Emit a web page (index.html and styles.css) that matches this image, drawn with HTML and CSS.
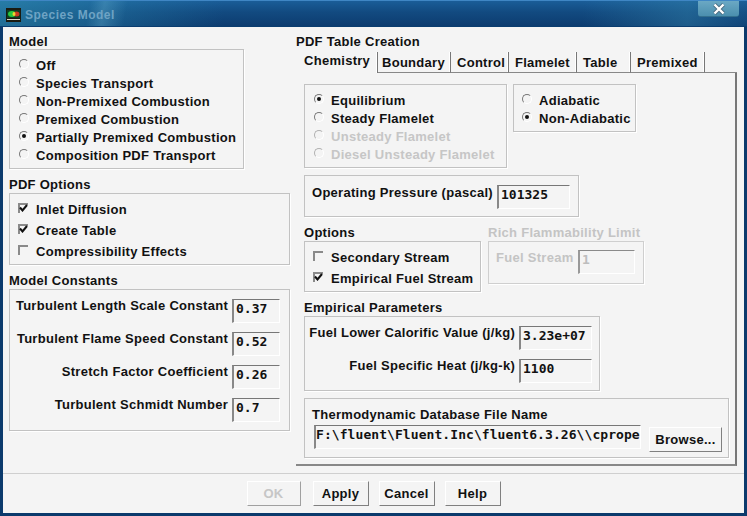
FILE: index.html
```html
<!DOCTYPE html>
<html lang="en">
<head>
<meta charset="utf-8">
<title>Species Model</title>
<link rel="stylesheet" href="styles.css">
</head>
<body>
<div class="window">
  <header class="titlebar">
    <svg class="app-icon" width="15" height="14" viewBox="0 0 15 14">
      <rect width="15" height="14" fill="#1a1a10"/>
      <rect x="1" y="2" width="13" height="8" fill="#0c3c20"/>
      <ellipse cx="6" cy="6" rx="4" ry="3" fill="#26c83c"/>
      <ellipse cx="10.500" cy="6" rx="3" ry="2.500" fill="#c83a20"/>
      <ellipse cx="8" cy="6" rx="1.500" ry="2" fill="#e8d830"/>
      <rect x="1" y="11" width="13" height="1" fill="#d8d8c8"/>
    </svg>
    <span class="title-text">Species Model</span>
    <button class="close" aria-label="Close">
      <svg width="14" height="12" viewBox="0 0 14 12"><path d="M2.500 1.500L11.500 10.500M11.500 1.500L2.500 10.500" stroke="#4a6a80" stroke-width="4" fill="none"/><path d="M2.500 1.500L11.500 10.500M11.500 1.500L2.500 10.500" stroke="#fff" stroke-width="2.400" fill="none"/></svg>
    </button>
  </header>
  <div class="client">
    <main class="main">
      <div class="left">
        <section>
          <h2 class="legend top">Model</h2>
          <div class="group model-box">
            <label class="opt"><i class="radio"></i>Off</label>
            <label class="opt"><i class="radio"></i>Species Transport</label>
            <label class="opt"><i class="radio"></i>Non-Premixed Combustion</label>
            <label class="opt"><i class="radio"></i>Premixed Combustion</label>
            <label class="opt"><i class="radio on"></i>Partially Premixed Combustion</label>
            <label class="opt"><i class="radio"></i>Composition PDF Transport</label>
          </div>
        </section>
        <section>
          <h2 class="legend">PDF Options</h2>
          <div class="group pdf-box">
            <label class="chk-row"><i class="check on"><svg width="9" height="8" viewBox="0 0 9 8"><path d="M1 3.500L3.500 6.500L8 1" stroke="#111" stroke-width="2" fill="none"/></svg></i>Inlet Diffusion</label>
            <label class="chk-row"><i class="check on"><svg width="9" height="8" viewBox="0 0 9 8"><path d="M1 3.500L3.500 6.500L8 1" stroke="#111" stroke-width="2" fill="none"/></svg></i>Create Table</label>
            <label class="chk-row"><i class="check"></i>Compressibility Effects</label>
          </div>
        </section>
        <section>
          <h2 class="legend">Model Constants</h2>
          <div class="group const-box">
            <div class="field-row"><span class="field-label">Turbulent Length Scale Constant</span><span class="input w47">0.37</span></div>
            <div class="field-row"><span class="field-label">Turbulent Flame Speed Constant</span><span class="input w47">0.52</span></div>
            <div class="field-row"><span class="field-label">Stretch Factor Coefficient</span><span class="input w47">0.26</span></div>
            <div class="field-row"><span class="field-label">Turbulent Schmidt Number</span><span class="input w47">0.7</span></div>
          </div>
        </section>
      </div>
      <div class="right">
        <h2 class="legend top">PDF Table Creation</h2>
        <nav class="tabs">
          <span class="tab active">Chemistry</span>
          <span class="tab">Boundary</span>
          <span class="tab">Control</span>
          <span class="tab">Flamelet</span>
          <span class="tab">Table</span>
          <span class="tab">Premixed</span>
          <span class="tab-rest"></span>
        </nav>
        <div class="panel">
          <div class="hrow">
            <div class="group flame-box">
              <label class="opt"><i class="radio on"></i>Equilibrium</label>
              <label class="opt"><i class="radio"></i>Steady Flamelet</label>
              <label class="opt off"><i class="radio"></i>Unsteady Flamelet</label>
              <label class="opt off"><i class="radio"></i>Diesel Unsteady Flamelet</label>
            </div>
            <div class="group adia-box">
              <label class="opt"><i class="radio"></i>Adiabatic</label>
              <label class="opt"><i class="radio on"></i>Non-Adiabatic</label>
            </div>
          </div>
          <div class="group press-box">
            <span class="inline-label">Operating Pressure (pascal)</span><span class="input w72">101325</span>
          </div>
          <div class="hrow options-row">
            <section>
              <h2 class="legend">Options</h2>
              <div class="group options-box">
                <label class="chk-row"><i class="check"></i>Secondary Stream</label>
                <label class="chk-row"><i class="check on"><svg width="9" height="8" viewBox="0 0 9 8"><path d="M1 3.500L3.500 6.500L8 1" stroke="#111" stroke-width="2" fill="none"/></svg></i>Empirical Fuel Stream</label>
              </div>
            </section>
            <section>
              <h2 class="legend off">Rich Flammability Limit</h2>
              <div class="group rich-box off">
                <span class="inline-label">Fuel Stream</span><span class="input w56">1</span>
              </div>
            </section>
          </div>
          <section class="emp">
            <h2 class="legend">Empirical Parameters</h2>
            <div class="group emp-box">
              <div class="field-row"><span class="field-label">Fuel Lower Calorific Value (j/kg)</span><span class="input w72">3.23e+07</span></div>
              <div class="field-row"><span class="field-label">Fuel Specific Heat (j/kg-k)</span><span class="input w72">1100</span></div>
            </div>
          </section>
          <div class="group thermo-box">
            <div class="thermo-label">Thermodynamic Database File Name</div>
            <div class="thermo-row">
              <span class="input path">F:\fluent\Fluent.Inc\fluent6.3.26\\cprope</span>
              <button class="btn browse">Browse...</button>
            </div>
          </div>
        </div>
      </div>
    </main>
    <footer class="footer">
      <button class="btn ok" disabled>OK</button>
      <button class="btn">Apply</button>
      <button class="btn">Cancel</button>
      <button class="btn">Help</button>
    </footer>
  </div>
</div>
</body>
</html>
```
FILE: styles.css
```css
* { box-sizing: border-box; }
html, body { margin: 0; padding: 0; }
body {
  width: 747px;
  height: 516px;
  overflow: hidden;
  font: bold 13px/16px "Liberation Sans", Arial, sans-serif;
  letter-spacing: 0.28px;
  color: #111;
  background: #f4f4f4;
}
.window { width: 747px; height: 516px; display: flex; flex-direction: column; }

/* title bar */
.titlebar {
  height: 27px;
  flex: none;
  display: flex;
  align-items: flex-start;
  padding-left: 6px;
  border-top: 1px solid #3f86c4;
  border-bottom: 1px solid #0a3d70;
  background:
    linear-gradient(100deg, transparent 12%, rgba(120,190,220,.28) 14%, transparent 17%),
    linear-gradient(90deg, rgba(50,150,180,.55) 0, rgba(40,130,170,.4) 14%, rgba(20,80,130,0) 30%, rgba(20,80,130,0) 78%, rgba(50,130,170,.45) 92%, rgba(30,100,150,.2) 100%),
    linear-gradient(180deg, #1a5d98 0, #124a80 45%, #0d3c70 100%);
}
.app-icon { margin-top: 7px; flex: none; }
.title-text {
  margin: 6px 0 0 4px;
  color: #6ea3c4;
  font-size: 12px;
  font-weight: bold;
  letter-spacing: 0.5px;
}
.close {
  margin: 0 8px 0 auto;
  width: 41px;
  height: 16px;
  padding: 0;
  display: flex;
  align-items: center;
  justify-content: center;
  border: 0;
  border-bottom: 1px solid #34708f;
  border-radius: 0 0 3px 3px;
  background: linear-gradient(180deg, #6ba8c4, #4b8fae);
}

/* client area */
.client {
  flex: 1;
  display: flex;
  flex-direction: column;
  min-height: 0;
  border-left: 3px solid #0b3a6c;
  border-right: 3px solid #0b3a6c;
  border-bottom: 3px solid #0b3a6c;
  background: #f4f4f4;
}
.main {
  height: 447px;
  flex: none;
  display: flex;
  padding: 6px 0 0 6px;
  border-bottom: 1px solid #cfcfcf;
}
.left { width: 281px; flex: none; display: flex; flex-direction: column; gap: 8px; }
.right { width: 441px; margin-left: 6px; flex: none; display: flex; flex-direction: column; }
.legend { margin: 0; height: 16px; font: inherit; color: #111; }
.legend.top { padding-top: 1px; }
.legend.off { color: #c4c4c4; }

/* group boxes */
.group {
  border: 1px solid #c2c2c2;
  box-shadow: 1px 1px 0 #fff;
}
.group.off { border-color: #cfcfcf; color: #c4c4c4; }
.model-box { width: 235px; height: 120px; padding: 6px 0 0 9px; }
.pdf-box { height: 72px; padding: 5px 0 0 8px; }
.const-box { height: 142px; padding: 9px 9px 0 0; display: flex; flex-direction: column; gap: 9px; }

/* options */
.opt { display: flex; align-items: center; height: 18px; padding-top: 2px; gap: 7px; }
.opt.off { color: #c6c6c6; }
.radio {
  position: relative;
  width: 10px;
  height: 10px;
  flex: none;
  margin-top: -5px;
  border: 1px solid;
  border-color: #777 #fff #fff #777;
  border-radius: 50%;
}
.opt.off .radio { border-color: #b0b0b0 #fff #fff #b0b0b0; }
.radio.on::after {
  content: "";
  position: absolute;
  left: 2px;
  top: 2px;
  width: 4px;
  height: 4px;
  border-radius: 50%;
  background: #111;
}
.chk-row { display: flex; align-items: center; height: 21px; gap: 8px; }
.check {
  width: 10px;
  height: 10px;
  flex: none;
  margin-top: -3px;
  border-top: 2px solid #8a8a8a;
  border-left: 2px solid #8a8a8a;
  display: flex;
}
.check svg { flex: none; margin: -1px 0 0 -1px; }

/* fields */
.field-row { display: flex; justify-content: flex-end; align-items: flex-start; gap: 4px; }
.field-label { margin-top: -1px; white-space: nowrap; }
.inline-label { white-space: nowrap; }
.input {
  display: block;
  height: 24px;
  flex: none;
  padding: 0 0 0 2px;
  font: bold 13px/17px "DejaVu Sans Mono", "Liberation Mono", monospace;
  letter-spacing: 0;
  color: #111;
  white-space: nowrap;
  overflow: hidden;
  border-top: 1px solid #777;
  border-left: 2px solid #888;
  border-right: 1px solid #fff;
  border-bottom: 1px solid #fff;
}
.group.off .input { color: #bdbdbd; border-top-color: #8a8a8a; border-left-color: #999; }
.w47 { width: 48px; }
.w56 { width: 57px; }
.w72 { width: 73px; }

/* tabs */
.tabs {
  margin-top: 3px;
  height: 21px;
  flex: none;
  display: grid;
  grid-template-columns: 82px 73px 58px 68px 54px 74px 1fr;
}
.tab {
  padding: 3px 0 0 6px;
  white-space: nowrap;
  border-right: 1px solid #777;
  border-bottom: 1px solid #888;
  box-shadow: inset -1px 0 0 #fff;
}
.tab.active { padding: 1px 0 0 8px; border-bottom: 0; }
.tab.active + .tab { padding-left: 4px; }
.tab-rest { border-bottom: 1px solid #888; }
.panel {
  height: 393px;
  flex: none;
  padding: 11px 0 0 8px;
  border-right: 2px solid #777;
  border-bottom: 2px solid #888;
  display: flex;
  flex-direction: column;
  gap: 7px;
}
.hrow { display: flex; align-items: flex-start; gap: 6px; }
.flame-box { width: 203px; height: 84px; padding: 6px 0 0 9px; }
.adia-box { width: 123px; height: 48px; padding: 6px 0 0 8px; }
.press-box { width: 275px; height: 42px; padding: 9px 8px 0 7px; display: flex; align-items: flex-start; justify-content: space-between; }
.options-row { gap: 7px; height: 67px; margin-top: 1px; }
.options-box { width: 177px; height: 51px; padding: 5px 0 0 8px; }
.rich-box { width: 156px; height: 43px; padding: 8px 8px 0 7px; display: flex; align-items: flex-start; justify-content: space-between; }
.emp { margin-top: 1px; }
.emp-box { width: 296px; height: 75px; padding: 9px 7px 0 0; display: flex; flex-direction: column; gap: 9px; }
.thermo-box { width: 425px; height: 60px; padding: 8px 0 0 7px; }
.thermo-label { height: 16px; }
.thermo-row { display: flex; align-items: flex-start; gap: 8px; margin: 2px 0 0 2px; }
.path { width: 327px; padding-left: 0; letter-spacing: 0.07px; }

/* buttons */
.btn {
  height: 25px;
  width: 56px;
  padding: 0;
  font: inherit;
  letter-spacing: inherit;
  color: #111;
  background: #f4f4f4;
  border: 1px solid;
  border-color: #fff #808080 #808080 #fff;
}
.btn:disabled { color: #c6c6c6; border-color: #fff #a0a0a0 #a0a0a0 #fff; }
.browse { width: 73px; margin-top: 2px; }
.footer {
  flex: 1;
  display: flex;
  justify-content: center;
  align-items: flex-start;
  gap: 10px;
  padding-top: 7px;
}
.ok { width: 54px; margin-right: 2px; }
```
